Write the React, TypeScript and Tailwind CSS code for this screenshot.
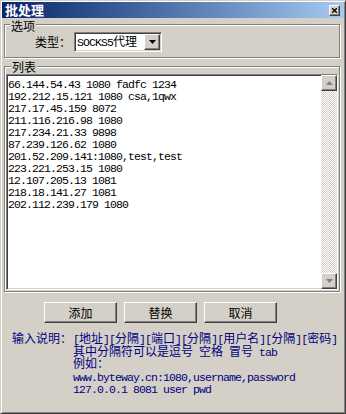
import React from "react";

const cjk = "font-['Noto_Sans_CJK_SC',sans-serif] text-[12px]";
const mono = "font-['Liberation_Mono',monospace] text-[11.5px] tracking-[-0.9px]";

// SimSun-like mix: CJK at 12px, latin at a 6px cell
function T({ s }: { s: string }) {
  const parts = s.split(/([\u2E80-\uFFFF]+)/);
  return (
    <>
      {parts.map((p, i) =>
        p === "" ? null : /[\u2E80-\uFFFF]/.test(p) ? (
          <span key={i} className={cjk}>
            {p}
          </span>
        ) : (
          <span key={i} className={`${mono} whitespace-pre`}>
            {p}
          </span>
        )
      )}
    </>
  );
}

const raised =
  "bg-[#d4d0c8] border border-t-white border-l-white border-r-[#404040] border-b-[#404040] shadow-[inset_-1px_-1px_#808080]";
const sunken =
  "border border-t-[#808080] border-l-[#808080] border-r-white border-b-white shadow-[inset_1px_1px_#404040,inset_-1px_-1px_#d4d0c8]";

function ArrowBtn({ up, color = "#000" }: { up?: boolean; color?: string }) {
  return (
    <div className={`${raised} w-[16px] h-[16px] flex items-center justify-center`}>
      <svg width="7" height="4" viewBox="0 0 7 4">
        <path d={up ? "M3.5 0 L7 4 L0 4 Z" : "M0 0 L7 0 L3.5 4 Z"} fill={color} />
      </svg>
    </div>
  );
}

function Group({ label, labelLeft, labelTop, className, children }: {
  label: string;
  labelLeft: string;
  labelTop: string;
  className: string;
  children: React.ReactNode;
}) {
  return (
    <div
      className={`relative ml-[2px] w-[336px] border border-[#808080] shadow-[1px_1px_0_#fff,inset_1px_1px_0_#fff] ${className}`}
    >
      <div className={`absolute ${labelLeft} ${labelTop} px-[1px] bg-[#d4d0c8] leading-[12px] h-[12px]`}>
        <T s={label} />
      </div>
      {children}
    </div>
  );
}

const lines = [
  "66.144.54.43 1080 fadfc 1234",
  "192.212.15.121 1080 csa,1qwx",
  "217.17.45.159 8072",
  "211.116.216.98 1080",
  "217.234.21.33 9898",
  "87.239.126.62 1080",
  "201.52.209.141:1080,test,test",
  "223.221.253.15 1080",
  "12.107.205.13 1081",
  "218.18.141.27 1081",
  "202.112.239.179 1080",
];

const help = [
  "其中分隔符可以是逗号 空格 冒号 tab",
  "例如：",
  "www.byteway.cn:1080,username,password",
  "127.0.0.1 8081 user pwd",
];

export default function App() {
  return (
    <div className="w-[346px] h-[414px] bg-[#d4d0c8] border border-t-[#d4d0c8] border-l-[#d4d0c8] border-r-[#404040] border-b-[#404040] shadow-[inset_1px_1px_#fff,inset_-1px_-1px_#808080] p-[1px] text-black overflow-hidden">
      {/* title bar */}
      <div className="h-[16px] flex items-center justify-between bg-linear-to-r from-[#0a246a] to-[#a6caf0]">
        <span className="pl-[3px] text-white font-bold text-[13px] leading-[16px] font-['Noto_Sans_CJK_SC',sans-serif]">
          批处理
        </span>
        <div className={`${raised} w-[11px] h-[11px] mr-[4px] flex items-center justify-center`}>
          <svg width="5" height="5" viewBox="0 0 5 5">
            <path d="M0 0 L5 5 M5 0 L0 5" stroke="#000" strokeWidth="1.3" />
          </svg>
        </div>
      </div>

      {/* 选项 */}
      <Group label="选项" labelLeft="left-[5px]" labelTop="-top-[6px]" className="mt-[6px] h-[34px]">
        <div className="flex items-center pl-[30px] pt-[6px]">
          <div className="leading-[20px]">
            <T s="类型：" />
          </div>
          <div className={`${sunken} bg-white ml-[3px] w-[88px] h-[20px] flex items-center justify-between pl-[2px] pr-[1px]`}>
            <div className="leading-[16px]">
              <T s="SOCKS5代理" />
            </div>
            <ArrowBtn />
          </div>
        </div>
      </Group>

      {/* 列表 */}
      <Group label="列表" labelLeft="left-[6px]" labelTop="-top-[7px]" className="mt-[8px] h-[226px]">
        <div className="pl-[1px] pt-[7px]">
          <div className={`${sunken} bg-white w-[332px] h-[216px] flex`}>
            <div className="flex-1 pl-[1px] pt-[1px]">
              {lines.map((l) => (
                <div key={l} className="h-[12px] leading-[12px]">
                  <T s={l} />
                </div>
              ))}
            </div>
            <div className="w-[16px] flex flex-col justify-between bg-[image:repeating-conic-gradient(#d4d0c8_0_25%,#ffffff_0_50%)] bg-[length:2px_2px]">
              <ArrowBtn up color="#808080" />
              <ArrowBtn color="#808080" />
            </div>
          </div>
        </div>
      </Group>

      {/* buttons */}
      <div className="flex gap-[7px] pl-[42px] mt-[10px]">
        {["添加", "替换", "取消"].map((b) => (
          <div key={b} className={`${raised} w-[73px] h-[21px] flex items-center justify-center leading-[12px]`}>
            <T s={b} />
          </div>
        ))}
      </div>

      {/* help text */}
      <div className="flex pl-[10px] mt-[8px] text-[#000080]">
        <div className="h-[12.5px] leading-[12.5px] w-[61px]">
          <T s="输入说明：" />
        </div>
        <div>
          <div className="h-[12.5px] leading-[12.5px]">
            <T s="[地址][分隔][端口][分隔][用户名][分隔][密码]" />
          </div>
          {help.map((h) => (
            <div key={h} className="h-[12.5px] leading-[12.5px]">
              <T s={h} />
            </div>
          ))}
        </div>
      </div>
    </div>
  );
}
